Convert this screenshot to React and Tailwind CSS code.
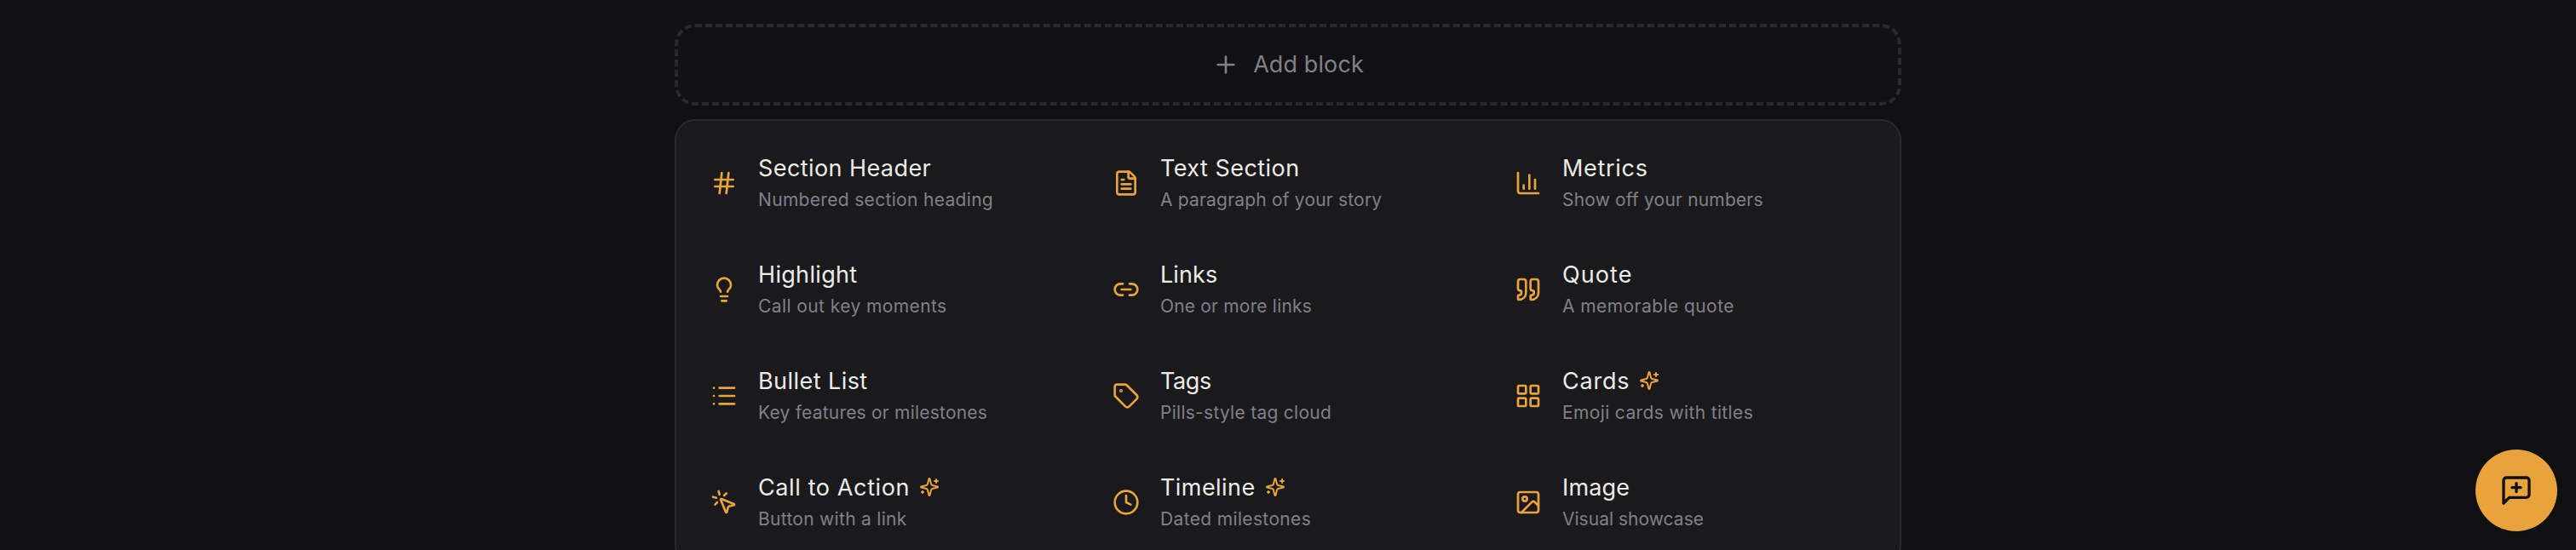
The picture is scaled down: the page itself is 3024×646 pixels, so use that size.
import React from "react";
import { Hash, FileText, Lightbulb, Quote, List, Tag, LayoutGrid, MousePointerClick, Clock, Image, Plus } from "lucide-react";

const stroke = {
  fill: "none",
  stroke: "currentColor",
  strokeWidth: 2,
  strokeLinecap: "round",
  strokeLinejoin: "round",
  viewBox: "0 0 24 24",
};

function LinkIcon({ className }) {
  return (
    <svg {...stroke} className={className}>
      <path d="M9 17H7A5 5 0 0 1 7 7h2" />
      <path d="M15 7h2a5 5 0 1 1 0 10h-2" />
      <path d="M8 12h8" />
    </svg>
  );
}

function BarsIcon({ className }) {
  return (
    <svg {...stroke} className={className}>
      <path d="M3 3v16a2 2 0 0 0 2 2h16" />
      <path d="M18 17V9" />
      <path d="M13 17V5" />
      <path d="M8 17v-3" />
    </svg>
  );
}

function SparklesIcon({ className }) {
  return (
    <svg {...stroke} className={className}>
      <path d="M9.937 15.5A2 2 0 0 0 8.5 14.063l-6.135-1.582a.5.5 0 0 1 0-.962L8.5 9.936A2 2 0 0 0 9.937 8.5l1.582-6.135a.5.5 0 0 1 .963 0L14.063 8.5A2 2 0 0 0 15.5 9.937l6.135 1.581a.5.5 0 0 1 0 .964L15.5 14.063a2 2 0 0 0-1.437 1.437l-1.582 6.135a.5.5 0 0 1-.963 0z" />
      <path d="M20 3v4" />
      <path d="M22 5h-4" />
      <path d="M4 17v2" />
      <path d="M5 18H3" />
    </svg>
  );
}

const blocks = [
  { icon: Hash, title: "Section Header", text: "Numbered section heading", t: "tracking-[0.42px]", d: "tracking-[0.32px]" },
  { icon: FileText, title: "Text Section", text: "A paragraph of your story", t: "tracking-[0.46px]", d: "tracking-[0.19px]" },
  { icon: BarsIcon, title: "Metrics", text: "Show off your numbers", t: "tracking-[0.7px]", d: "tracking-[0.18px]" },
  { icon: Lightbulb, title: "Highlight", text: "Call out key moments", t: "tracking-[0.32px]", d: "tracking-[0.41px]" },
  { icon: LinkIcon, title: "Links", text: "One or more links", t: "tracking-[0.1px]", d: "tracking-[0.18px]" },
  { icon: Quote, title: "Quote", text: "A memorable quote", t: "tracking-[1.08px]", d: "tracking-[0.43px]" },
  { icon: List, title: "Bullet List", text: "Key features or milestones", t: "tracking-[0.44px]", d: "tracking-[0.21px]" },
  { icon: Tag, title: "Tags", text: "Pills-style tag cloud", t: "tracking-[-0.39px]", d: "tracking-[0.27px]" },
  { icon: LayoutGrid, title: "Cards", text: "Emoji cards with titles", t: "tracking-[0.79px]", d: "tracking-[0.36px]", ai: true },
  { icon: MousePointerClick, title: "Call to Action", text: "Button with a link", t: "tracking-[0.62px]", d: "tracking-[0.29px]", ai: true },
  { icon: Clock, title: "Timeline", text: "Dated milestones", t: "tracking-[0.44px]", d: "tracking-[0.35px]", ai: true },
  { icon: Image, title: "Image", text: "Visual showcase", t: "tracking-[0.17px]", d: "tracking-[0.02px]" },
];

function BlockOption({ block }) {
  const Icon = block.icon;
  return (
    <button className="flex h-[121px] items-center gap-6 rounded-2xl px-7 text-left">
      <Icon className="mt-px size-8 shrink-0 text-[#e8a33d]" />
      <span className="flex flex-col gap-[3px] whitespace-nowrap">
        <span className="flex items-center gap-3 text-[27px] leading-[37px] text-[#edebe8]">
          <span className={block.t}>{block.title}</span>
          {block.ai && <SparklesIcon className="-ml-px size-6 text-[#e8a33d]" />}
        </span>
        <span className={`text-[21px] leading-8 text-[#827f8a] ${block.d}`}>{block.text}</span>
      </span>
    </button>
  );
}

export default function App() {
  return (
    <div className="h-[646px] overflow-hidden bg-[#111113] pt-7 font-[Inter,sans-serif]">
      <div className="mx-auto flex w-[1440px] flex-col gap-4">
        <button className="flex h-24 items-center justify-center gap-4 rounded-3xl border-4 border-dashed border-[#2a2a2d] text-[27px] text-[#827f8a]">
          <Plus className="size-8" />
          <span className="tracking-[0.1px]">Add block</span>
        </button>
        <div className="grid grid-cols-3 gap-1 rounded-3xl border-2 border-[#2a2a2d] bg-[#1a1a1c] p-3 shadow-[0_16px_48px_rgba(0,0,0,0.06)]">
          {blocks.map((block) => (
            <BlockOption key={block.title} block={block} />
          ))}
        </div>
      </div>
      <button className="fixed right-[22px] bottom-[22px] flex size-24 items-center justify-center rounded-full bg-[#e8a33d] text-[#111113] shadow-[0_8px_24px_rgba(0,0,0,0.1)]">
        <svg {...stroke} className="size-10">
          <path d="M21 15a2 2 0 0 1-2 2H7l-4 4V5a2 2 0 0 1 2-2h14a2 2 0 0 1 2 2z" />
          <path d="M12 7v6" />
          <path d="M9 10h6" />
        </svg>
      </button>
    </div>
  );
}
